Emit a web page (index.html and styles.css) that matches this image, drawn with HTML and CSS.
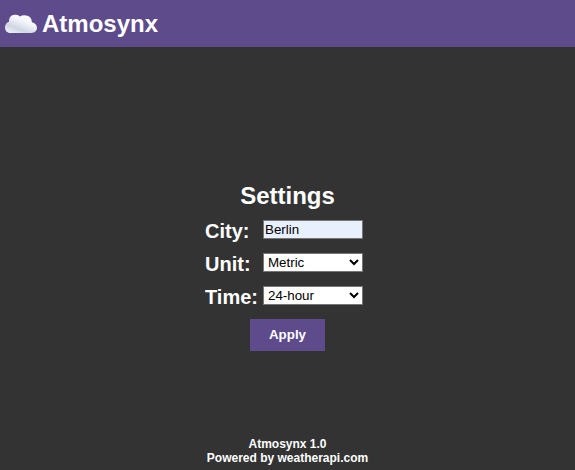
FILE: index.html
```html
<!DOCTYPE html>
<html lang="en">
<head>
<meta charset="utf-8">
<title>Atmosynx</title>
<link rel="stylesheet" href="styles.css">
</head>
<body>
<header class="bar">
<svg class="logo" viewBox="0 0 32 20" width="32" height="20"><defs><linearGradient id="g" x1=".1" y1="1" x2=".8" y2="0"><stop offset="0" stop-color="#f0f2f7"/><stop offset=".3" stop-color="#cfd6e3"/><stop offset=".65" stop-color="#f4f5f9"/><stop offset="1" stop-color="#fff"/></linearGradient></defs><path fill="url(#g)" d="M5.500 19C2 19 0 16.500 0 13.500C0 10.500 1.700 8.500 4 7.800C3.800 4 6 .8 9.500 .8C11.500 .8 13.500 1.200 14.800 2.400C17 1 20 .8 22.500 1.700C25.500 2.700 27 5.500 26.800 8.200C30 8.800 32 11 32 13.800C32 17 29.500 19 26.500 19Z"/></svg>
<h1>Atmosynx</h1>
</header>
<main class="settings">
<h2>Settings</h2>
<div class="row"><label for="city">City:</label><input id="city" class="field city" value="Berlin"></div>
<div class="row"><label for="unit">Unit:</label><select id="unit" class="field"><option>Metric</option></select></div>
<div class="row"><label for="time">Time:</label><select id="time" class="field"><option>24-hour</option></select></div>
<button class="apply">Apply</button>
</main>
<footer class="foot">Atmosynx 1.0<br>Powered by weatherapi.com</footer>
</body>
</html>
```
FILE: styles.css
```css
* { box-sizing: border-box; }
body { margin: 0; height: 470px; display: flex; flex-direction: column; background: #333; color: #fff; font-family: "Liberation Sans", Arial, sans-serif; overflow: hidden; }
.bar { height: 47px; flex: none; display: flex; align-items: center; gap: 5px; padding-left: 5px; background: #5e4b8b; }
h1 { margin: 0; font-size: 24px; line-height: 28px; }
.settings { width: 158px; margin: 135px auto 0 205px; }
h2 { margin: 0 0 6px; font-size: 24px; line-height: 28px; text-align: center; padding-left: 7px; }
.row { height: 33px; display: flex; }
label { width: 58px; font-size: 20px; line-height: 23px; padding-top: 4px; font-weight: bold; }
.field { width: 100px; height: 19px; margin: 4px 0 0; padding: 0; border: 1px solid #767676; border-radius: 0; background-color: #fff; color: #000; font: 13.333px "Liberation Sans", Arial, sans-serif; }
.city { background: #e8f0fe; padding: 1px; }
.apply { display: block; width: 75px; height: 32px; margin: 4px 0 0 45px; padding: 0 0 2px; border: 0; background: #5e4b8b; color: #fff; font: bold 13.333px "Liberation Sans", Arial, sans-serif; }
.foot { margin: auto 0 5px; text-align: center; font-size: 12px; line-height: 14px; font-weight: bold; }
```
